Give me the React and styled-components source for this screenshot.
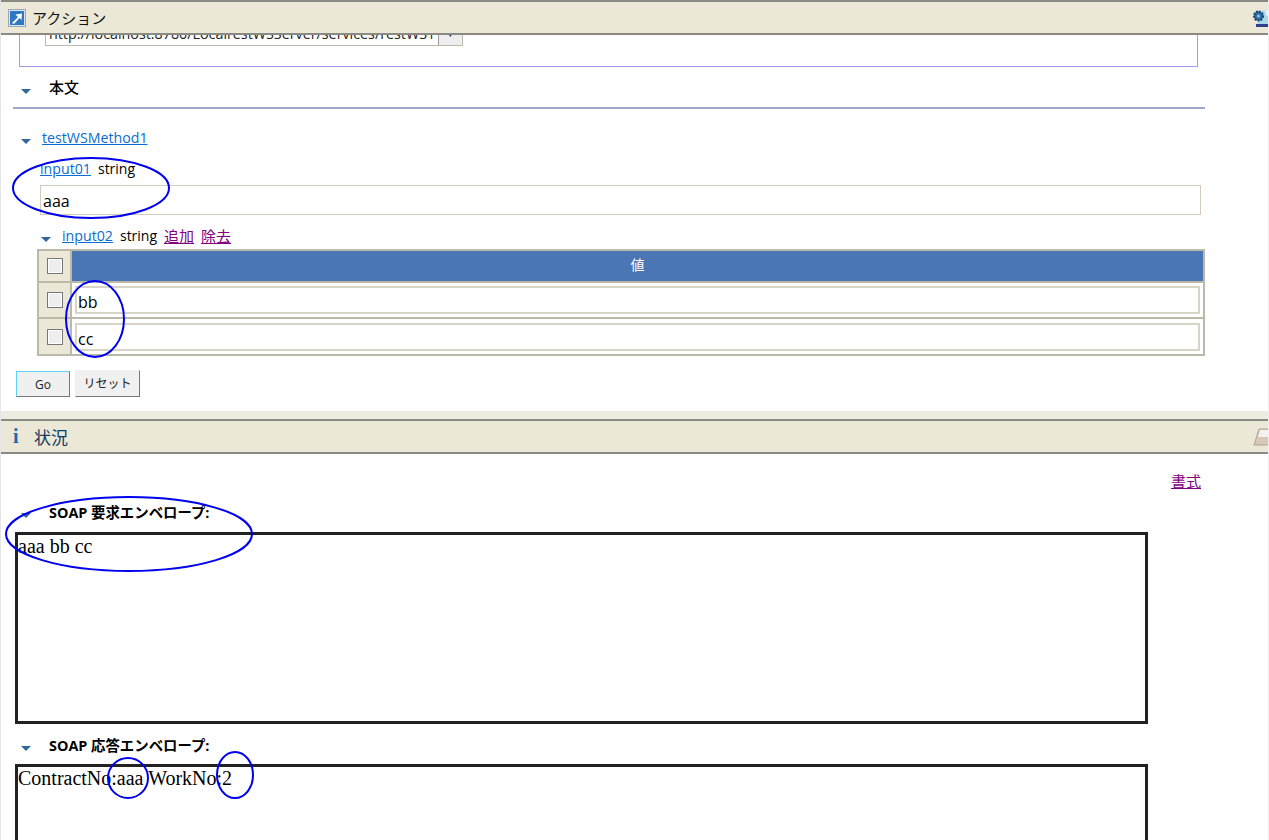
import styled, { createGlobalStyle } from "styled-components";

const BEIGE = "#ebe8d8";
const LINE = "#bdb9a8";
const UI_FONT = `"Open Sans", "Noto Sans CJK JP", sans-serif`;

const GlobalStyle = createGlobalStyle`
  html, body {
    margin: 0;
    padding: 0;
    height: 840px;
    overflow: hidden;
    background: #fff;
    font-family: ${UI_FONT};
    color: #000;
  }
`;

export default function App() {
  return (
    <Page>
      <GlobalStyle />
      <PanelHeader>
        <ActionIcon />
        <PanelTitle>アクション</PanelTitle>
        <GearIcon />
      </PanelHeader>
      <ActionBody>
        <GroupBox>
          <UrlField>
            <UrlText>http://localhost:8780/LocalrestWSServer/services/restWS1</UrlText>
            <UrlButton>▾</UrlButton>
          </UrlField>
        </GroupBox>
        <SectionRow $mt={11}>
          <Arrow />
          <Heading>本文</Heading>
        </SectionRow>
        <Rule />
        <MethodRow>
          <Arrow />
          <Link>testWSMethod1</Link>
        </MethodRow>
        <ParamRow>
          <Link>input01</Link>
          <span>string</span>
        </ParamRow>
        <WideInput>aaa</WideInput>
        <NestedRow>
          <Arrow />
          <Link>input02</Link>
          <span>string</span>
          <Link $visited>追加</Link>
          <Link $visited>除去</Link>
        </NestedRow>
        <ValueTable>
          <colgroup>
            <col width="33" />
            <col />
          </colgroup>
          <thead>
            <tr>
              <CheckCell $head><CheckBox /></CheckCell>
              <HeadCell>値</HeadCell>
            </tr>
          </thead>
          <tbody>
            {["bb", "cc"].map((value) => (
              <ValueRow key={value}>
                <CheckCell><CheckBox /></CheckCell>
                <ValueCell><ValueInput>{value}</ValueInput></ValueCell>
              </ValueRow>
            ))}
          </tbody>
        </ValueTable>
        <Buttons>
          <Button $primary>Go</Button>
          <Button>リセット</Button>
        </Buttons>
      </ActionBody>
      <Divider />
      <PanelHeader>
        <InfoGlyph>i</InfoGlyph>
        <PanelTitle $status>状況</PanelTitle>
        <EraserIcon />
      </PanelHeader>
      <StatusBody>
        <FormatRow>
          <Link $visited>書式</Link>
        </FormatRow>
        <SectionRow $mt={12}>
          <Arrow />
          <SoapHeading>SOAP 要求エンベロープ:</SoapHeading>
        </SectionRow>
        <Envelope $mt={10}>aaa bb cc</Envelope>
        <SectionRow $mt={11}>
          <Arrow />
          <SoapHeading>SOAP 応答エンベロープ:</SoapHeading>
        </SectionRow>
        <Envelope $mt={9}>ContractNo:aaa WorkNo:2</Envelope>
      </StatusBody>
      <Annotations />
    </Page>
  );
}

function ActionIcon() {
  return (
    <IconSvg viewBox="0 0 18 18" width="18" height="18">
      <rect x="0.5" y="0.5" width="17" height="17" fill="#dfe6f0" stroke="#9aa7b8" />
      <rect x="2" y="2" width="14" height="14" fill="#2f78c4" />
      <path d="M4 14 L10 8 L7.5 5.5 L14 4.5 L13.5 11 L11.5 9 L6 15 Z" fill="#fff" />
    </IconSvg>
  );
}

function GearIcon() {
  return (
    <RightIcon viewBox="0 0 16 18" width="16" height="18">
      <path d="M9 2 L16 0 L16 16 L4 16 Z" fill="#a8d8e8" />
      <path d="M12 1 H16 V8 L13 6 Z" fill="#e6f4f8" />
      <path d="M3 15 H16 V18 H3 Z" fill="#2d3f8f" />
      <circle cx="5.5" cy="7" r="4.5" fill="#2a6ea8" stroke="#14406e" strokeWidth="2" strokeDasharray="2 1" />
      <circle cx="5.5" cy="7" r="1.6" fill="#9cc0dc" />
    </RightIcon>
  );
}

function EraserIcon() {
  return (
    <RightIcon viewBox="0 0 16 18" width="16" height="18">
      <path d="M6 1 H16 V17 H1 Z" fill="#d8c8b8" stroke="#b0a08c" />
      <path d="M7 2 H16 V9 H5 Z" fill="#f4f2ee" />
    </RightIcon>
  );
}

function Annotations() {
  const rings = [
    [91, 188, 78, 30],
    [95, 319, 29, 38],
    [129, 534, 123, 37],
    [128, 778, 20, 20],
    [235, 775, 18, 23],
  ];
  return (
    <Overlay viewBox="0 0 1269 840" width="1269" height="840">
      {rings.map(([cx, cy, rx, ry]) => (
        <ellipse key={cx} cx={cx} cy={cy} rx={rx} ry={ry} fill="none" stroke="#0000f0" strokeWidth="2" />
      ))}
    </Overlay>
  );
}

const Page = styled.div`
  position: relative;
  width: 1269px;
  height: 840px;
  overflow: hidden;
  box-sizing: border-box;
  border-left: 1px solid #e6e6e6;
  border-right: 1px solid #f0f0f0;
`;

const PanelHeader = styled.div`
  display: flex;
  align-items: center;
  box-sizing: border-box;
  height: 35px;
  margin: 0 -1px;
  padding-left: 8px;
  background: ${BEIGE};
  border-top: 2px solid #8a8a84;
  border-bottom: 2px solid #8a8a84;
`;

const IconSvg = styled.svg`
  flex: none;
  margin-right: 6px;
`;

const RightIcon = styled.svg`
  flex: none;
  margin-left: auto;
`;

const PanelTitle = styled.span`
  font-size: ${(p) => (p.$status ? "17px" : "15px")};
  color: ${(p) => (p.$status ? "#123a5e" : "#111")};
`;

const InfoGlyph = styled.span`
  width: 12px;
  margin-left: 5px;
  margin-right: 9px;
  font: bold 20px "Liberation Serif", serif;
  color: #1c6aa8;
`;

const ActionBody = styled.div`
  height: 376px;
  overflow: hidden;
  font-size: 14px;
`;

const GroupBox = styled.div`
  box-sizing: border-box;
  width: 1179px;
  height: 52px;
  margin: -20px 0 0 18px;
  padding: 6px 0 0 25px;
  border: 1px solid #9c9cee;
`;

const UrlField = styled.div`
  display: flex;
  box-sizing: border-box;
  width: 418px;
  height: 24px;
  border: 1px solid ${LINE};
  background: #fff;
`;

const UrlText = styled.span`
  flex: 1;
  padding-left: 3px;
  font-size: 14.3px;
  line-height: 22px;
  white-space: nowrap;
  overflow: hidden;
  color: #222;
`;

const UrlButton = styled.span`
  flex: none;
  width: 23px;
  font-size: 9px;
  line-height: 22px;
  text-align: center;
  background: #eee;
  border-left: 1px solid #999;
`;

// the 2px of bottom padding lifts the label one pixel above the row's middle
const SectionRow = styled.div`
  display: flex;
  align-items: center;
  box-sizing: border-box;
  height: 20px;
  margin-top: ${(p) => p.$mt}px;
  padding: 0 0 2px 20px;
`;

const Arrow = styled.span`
  flex: none;
  width: 0;
  height: 0;
  margin-top: 8px;
  border-top: 5px solid #2f679c;
  border-left: 5px solid transparent;
  border-right: 5px solid transparent;
`;

const Heading = styled.span`
  margin-left: 18px;
  margin-bottom: 2px;
  font-size: 15px;
  font-weight: 500;
`;

const SoapHeading = styled.span`
  margin-left: 18px;
  font-size: 14.4px;
  font-weight: 700;
`;

const Rule = styled.div`
  width: 1192px;
  height: 2px;
  margin: 9px 0 0 12px;
  background: #9fa8c8;
`;

const MethodRow = styled.div`
  display: flex;
  align-items: center;
  gap: 11px;
  box-sizing: border-box;
  height: 20px;
  margin-top: 19px;
  padding: 0 0 2px 20px;
`;

const ParamRow = styled.div`
  display: flex;
  align-items: center;
  gap: 7px;
  box-sizing: border-box;
  height: 20px;
  margin-top: 11px;
  padding: 0 0 2px 39px;
`;

const NestedRow = styled.div`
  display: flex;
  align-items: center;
  gap: 7px;
  box-sizing: border-box;
  height: 20px;
  margin-top: 11px;
  padding: 0 0 2px 40px;

  ${Arrow} {
    margin-right: 4px;
  }
`;

const Link = styled.a`
  color: ${(p) => (p.$visited ? "#800080" : "#0a6cd0")};
  text-decoration: underline;
  font-size: ${(p) => (p.$visited ? "15px" : "14.2px")};
`;

const WideInput = styled.div`
  box-sizing: border-box;
  width: 1161px;
  height: 30px;
  margin: 6px 0 0 39px;
  padding-left: 2px;
  border: 1px solid #cfccbc;
  font-size: 16px;
  line-height: 30px;
`;

const ValueTable = styled.table`
  box-sizing: border-box;
  width: 1168px;
  margin: 3px 0 0 36px;
  border-collapse: collapse;
  table-layout: fixed;
`;

const CheckCell = styled.td`
  height: ${(p) => (p.$head ? "30px" : "34px")};
  padding: 0;
  text-align: center;
  vertical-align: middle;
  background: ${BEIGE};
  border: 2px solid ${LINE};
`;

const ValueRow = styled.tr`
  &:last-child ${CheckCell} {
    height: 35px;
  }
`;

const HeadCell = styled.th`
  padding: 0 0 5px;
  font-size: 14px;
  font-weight: 400;
  color: #fff;
  background: #4a77b4;
  border: 2px solid ${LINE};
`;

const ValueCell = styled.td`
  padding: 3px;
  border: 2px solid ${LINE};
`;

const CheckBox = styled.span`
  display: block;
  box-sizing: border-box;
  width: 16px;
  height: 16px;
  margin: 0 auto;
  border: 1px solid #777;
  background: #eeeeee;
  box-shadow: inset 0 0 0 1px #fff;
`;

const ValueInput = styled.div`
  box-sizing: border-box;
  height: 28px;
  padding-left: 1px;
  border: 2px solid #d8d5c8;
  font-size: 16px;
  line-height: 28px;
`;

const Buttons = styled.div`
  display: flex;
  align-items: flex-end;
  gap: 5px;
  margin: 14px 0 0 15px;
`;

const Button = styled.div`
  box-sizing: border-box;
  width: ${(p) => (p.$primary ? "54px" : "65px")};
  height: ${(p) => (p.$primary ? "26px" : "27px")};
  font-size: 12px;
  line-height: 25px;
  text-align: center;
  color: #222;
  background: #f0f0f0;
  border: 1px solid ${(p) => (p.$primary ? "#5cd4f2" : "#f0f0f0")};
  border-right: 1px solid #777;
  border-bottom: 1px solid #777;
`;

const Divider = styled.div`
  height: 8px;
  margin: 0 -1px;
  background: #eeece0;
`;

const StatusBody = styled.div`
  padding-top: 16px;
`;

const FormatRow = styled.div`
  display: flex;
  justify-content: flex-end;
  align-items: center;
  height: 20px;
  padding-right: 67px;
`;

const Envelope = styled.div`
  box-sizing: border-box;
  width: 1133px;
  height: 192px;
  margin: ${(p) => p.$mt}px 0 0 14px;
  border: 3px solid #222;
  font: 20px/22px "Liberation Serif", serif;
`;

const Overlay = styled.svg`
  position: absolute;
  left: -1px;
  top: 0;
  pointer-events: none;
`;
